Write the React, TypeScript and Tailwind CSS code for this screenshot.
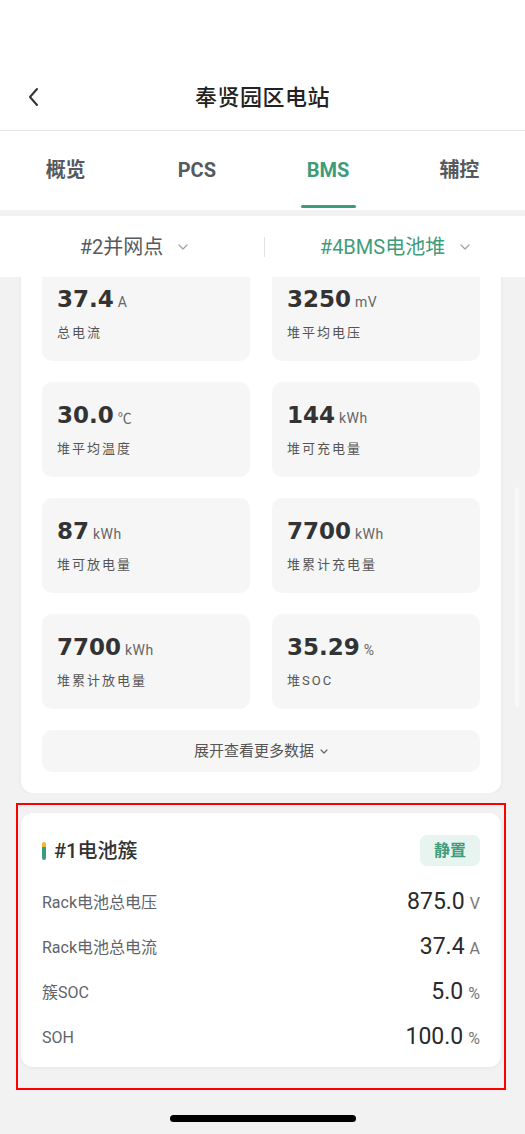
import React from "react";

const GREEN = "text-[#3f9c7b]";

const tiles: [string, string, string][] = [
  ["37.4", "A", "总电流"],
  ["3250", "mV", "堆平均电压"],
  ["30.0", "℃", "堆平均温度"],
  ["144", "kWh", "堆可充电量"],
  ["87", "kWh", "堆可放电量"],
  ["7700", "kWh", "堆累计充电量"],
  ["7700", "kWh", "堆累计放电量"],
  ["35.29", "%", "堆SOC"],
];

const rows: [string, string, string][] = [
  ["Rack电池总电压", "875.0", "V"],
  ["Rack电池总电流", "37.4", "A"],
  ["簇SOC", "5.0", "%"],
  ["SOH", "100.0", "%"],
];

function Chevron({ className }: { className?: string }) {
  return (
    <svg width="10" height="6" viewBox="0 0 10 6" className={className}>
      <polyline points="1,1 5,5 9,1" fill="none" stroke="currentColor" strokeWidth="1.2" strokeLinecap="round" strokeLinejoin="round" />
    </svg>
  );
}

export default function App() {
  return (
    <div className="relative w-[525px] h-[1134px] overflow-hidden bg-[#f2f2f2] font-['Roboto','Noto_Sans_CJK_SC',sans-serif]">
      <div className="h-[64px] bg-white" />
      <header className="h-[66px] bg-white flex items-center">
        <div className="w-[60px] flex pl-[27px]">
          <svg width="12" height="20" viewBox="0 0 12 20">
            <polyline points="10,2 3,10 10,18" fill="none" stroke="#333" strokeWidth="2" strokeLinecap="round" strokeLinejoin="round" />
          </svg>
        </div>
        <div className="flex-1 text-center text-[22px] tracking-[0.5px] font-medium text-[#222]">奉贤园区电站</div>
        <div className="w-[60px]" />
      </header>
      <div className="h-px bg-[#e4e4e4]" />
      <nav className="h-[79px] bg-white grid grid-cols-4">
        {["概览", "PCS", "BMS", "辅控"].map((t) => {
          const active = t === "BMS";
          return (
            <div key={t} className="flex flex-col items-center">
              <div className={`mt-[25px] h-[28px] leading-[28px] text-[20px] font-bold ${active ? GREEN : "text-[#555a60]"}`}>{t}</div>
              <div className={`mt-[21px] h-[3px] w-[55px] rounded-full ${active ? "bg-[#3f9c7b]" : "bg-transparent"}`} />
            </div>
          );
        })}
      </nav>
      <div className="h-[6px]" />
      <div className="h-[61px] bg-white flex items-center">
        <div className="flex-1 flex items-center justify-center gap-[15px] pl-[4px]">
          <span className="text-[20px] text-[#555a60]">#2并网点</span>
          <Chevron className="text-[#a0a0a0]" />
        </div>
        <div className="w-px h-[20px] bg-[#e2e2e2]" />
        <div className="flex-1 flex items-center justify-center gap-[15px]">
          <span className={`text-[20px] ${GREEN}`}>#4BMS电池堆</span>
          <Chevron className="text-[#a0a0a0]" />
        </div>
      </div>

      <div className="overflow-hidden">
        <div className="-mt-[32px] ml-[21px] w-[480px] bg-white rounded-[12px] shadow-[0_1px_4px_rgba(0,0,0,0.05)] p-[21px]">
          <div className="grid grid-cols-2 gap-x-[22px] gap-y-[21px]">
            {tiles.map(([v, u, l], i) => (
              <div key={i} className="h-[95px] rounded-[10px] bg-[#f6f6f6] pl-[15px] pt-[18px]">
                <div className="h-[30px] flex items-baseline gap-[4px]">
                  <span className="font-['DejaVu_Sans',sans-serif] font-bold text-[23px] text-[#333] leading-[30px]">{v}</span>
                  <span className="text-[14px] text-[#666] tracking-[0.5px]">{u}</span>
                </div>
                <div className="mt-[9px] text-[13px] leading-[20px] tracking-[2px] text-[#555]">{l}</div>
              </div>
            ))}
          </div>
          <div className="mt-[21px] h-[42px] rounded-[10px] bg-[#f6f6f6] flex items-center justify-center gap-[6px]">
            <span className="text-[15px] text-[#555]">展开查看更多数据</span>
            <svg width="8" height="5" viewBox="0 0 8 5">
              <polyline points="1,1 4,4 7,1" fill="none" stroke="#666" strokeWidth="1.2" strokeLinecap="round" strokeLinejoin="round" />
            </svg>
          </div>
        </div>
      </div>

      <div className="mt-[10px] ml-[16px] w-[490px] border-2 border-[#ff0000] px-[3px] pt-[8px] pb-[21px]">
        <div className="bg-white rounded-[12px] shadow-[0_1px_4px_rgba(0,0,0,0.05)] px-[21px] pt-[22px] pb-[7px]">
          <div className="h-[31px] flex items-center">
            <div className="w-[4px] h-[18px] rounded-full overflow-hidden flex flex-col">
              <div className="h-[5px] bg-[#f2b632]" />
              <div className="flex-1 bg-[#3f9c7b]" />
            </div>
            <div className="ml-[8px] text-[20px] font-medium text-[#333]">#1电池簇</div>
            <div className="ml-auto h-[31px] px-[14px] rounded-[7px] bg-[#e7f4ef] flex items-center">
              <span className={`text-[16px] font-bold ${GREEN}`}>静置</span>
            </div>
          </div>
          <div className="mt-[14px]">
            {rows.map(([l, v, u]) => (
              <div key={l} className="h-[45px] flex items-center justify-between">
                <span className="text-[16px] text-[#60646a]">{l}</span>
                <span className="flex items-baseline gap-[5px]">
                  <span className="text-[23px] text-[#2a2a2a]">{v}</span>
                  <span className="text-[16px] text-[#777]">{u}</span>
                </span>
              </div>
            ))}
          </div>
        </div>
      </div>

      <div className="mt-[25px] mx-auto w-[186px] h-[7px] rounded-full bg-black" />

      <div className="absolute left-[515px] top-[487px] w-[4px] h-[220px] rounded-full bg-[#f8f8f8]" />
    </div>
  );
}
